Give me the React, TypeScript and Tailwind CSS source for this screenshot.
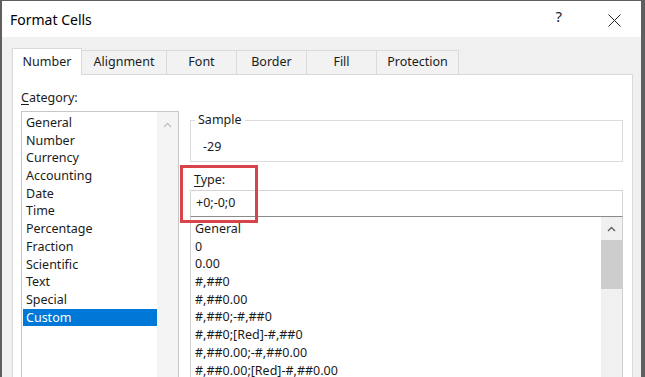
import React from "react";

const categories = [
  "General",
  "Number",
  "Currency",
  "Accounting",
  "Date",
  "Time",
  "Percentage",
  "Fraction",
  "Scientific",
  "Text",
  "Special",
  "Custom",
];

const formats = [
  "General",
  "0",
  "0.00",
  "#,##0",
  "#,##0.00",
  "#,##0;-#,##0",
  "#,##0;[Red]-#,##0",
  "#,##0.00;-#,##0.00",
  "#,##0.00;[Red]-#,##0.00",
  "$#,##0;-$#,##0",
];

const tabs = [
  { label: "Number", w: "w-[70px]" },
  { label: "Alignment", w: "w-[85px]" },
  { label: "Font", w: "w-[70px]" },
  { label: "Border", w: "w-[70px]" },
  { label: "Fill", w: "w-[70px]" },
  { label: "Protection", w: "w-[82px]" },
];

function ChevronUp({ className }: { className?: string }) {
  return (
    <svg width="9" height="6" viewBox="0 0 9 6" className={className}>
      <path d="M1 5 L4.5 1.5 L8 5" fill="none" stroke="currentColor" strokeWidth="1.4" />
    </svg>
  );
}

export default function App() {
  return (
    <div
      className="relative w-[645px] h-[377px] overflow-hidden bg-[#5f5f5f] pl-[2px] pt-[1px] pr-[4px] text-[#1b1b1b]"
      style={{ fontFamily: '"Noto Sans", "Open Sans", sans-serif' }}
    >
      <div className="flex flex-col h-full bg-[#f0f0f0]">
        {/* title bar */}
        <div className="h-[36px] shrink-0 bg-white flex items-center pl-[8px]">
          <span className="text-[14px] text-black">Format Cells</span>
          <span className="ml-auto mr-[46px] -mt-[6px] text-[15px] text-[#222]">?</span>
          <svg width="13" height="13" viewBox="0 0 13 13" className="mr-[20px] mt-[2px]">
            <path d="M0.5 0.5 L12.5 12.5 M12.5 0.5 L0.5 12.5" stroke="#222" strokeWidth="1" />
          </svg>
        </div>

        {/* tabs */}
        <div className="flex items-end pl-[10px] pt-[10px] h-[37px] shrink-0">
          {tabs.map((t, i) =>
            i === 0 ? (
              <div
                key={t.label}
                className={`${t.w} h-[27px] -mb-px relative z-10 bg-white border border-b-0 border-[#d9d9d9] flex items-center justify-center text-[12.5px]`}
              >
                {t.label}
              </div>
            ) : (
              <div
                key={t.label}
                className={`${t.w} h-[24px] bg-[#f2f2f2] border border-l-0 border-b-0 border-[#dadada] flex items-center justify-center text-[12.5px]`}
              >
                {t.label}
              </div>
            )
          )}
        </div>

        {/* panel */}
        <div className="flex-1 ml-[10px] mr-[8px] bg-white border border-[#d9d9d9] flex pl-[8px] pr-[9px] text-[12.5px]">
          {/* category column */}
          <div className="w-[158px] shrink-0 flex flex-col pt-[14px]">
            <div className="leading-[18px] mb-[4px]">
              <span className="underline underline-offset-2">C</span>ategory:
            </div>
            <div className="flex-1 flex border border-[#c6c6c6] bg-white">
              <div className="flex-1 pt-[2px] pl-px">
                {categories.map((c) => (
                  <div
                    key={c}
                    className={`h-[17.7px] leading-[17.7px] px-[3px] ${
                      c === "Custom" ? "bg-[#0078d7] text-white" : ""
                    }`}
                  >
                    {c}
                  </div>
                ))}
              </div>
              <div className="w-[21px] bg-[#f4f4f4] flex justify-center pt-[10px]">
                <ChevronUp className="text-[#c2c2c2]" />
              </div>
            </div>
          </div>

          {/* right column */}
          <div className="flex-1 ml-[11px] flex flex-col pt-[36px]">
            <fieldset className="border border-[#dcdcdc] pb-[5px]">
              <legend className="leading-[18px] ml-[4px] px-[3px]">Sample</legend>
              <div className="leading-[18px] pt-[9px] pl-[12px]">-29</div>
            </fieldset>

            <div className="leading-[18px] mt-[9px] pl-[4px]">
              <span className="underline underline-offset-2">T</span>ype:
            </div>
            <div className="mt-[1px] h-[27px] shrink-0 border border-[#d4d4d4] border-b-[#8a8a8a] flex items-center pl-[5px]">
              +0;-0;0
            </div>

            <div className="flex-1 flex border border-t-0 border-[#d0d0d0] min-h-0 overflow-hidden">
              <div className="flex-1 pt-[3px] pl-[4px]">
                {formats.map((f) => (
                  <div key={f} className="h-[17.7px] leading-[17.7px] whitespace-nowrap">
                    {f}
                  </div>
                ))}
              </div>
              <div className="w-[21px] bg-[#f0f0f0] flex flex-col">
                <div className="h-[23px] flex items-center justify-center">
                  <ChevronUp className="text-[#606060]" />
                </div>
                <div className="h-[49px] bg-[#cdcdcd]" />
              </div>
            </div>
          </div>
        </div>
      </div>

      {/* annotation highlight */}
      <div className="absolute left-[180px] top-[165px] w-[78px] h-[58px] border-[3px] border-[#d9434a]" />
    </div>
  );
}
